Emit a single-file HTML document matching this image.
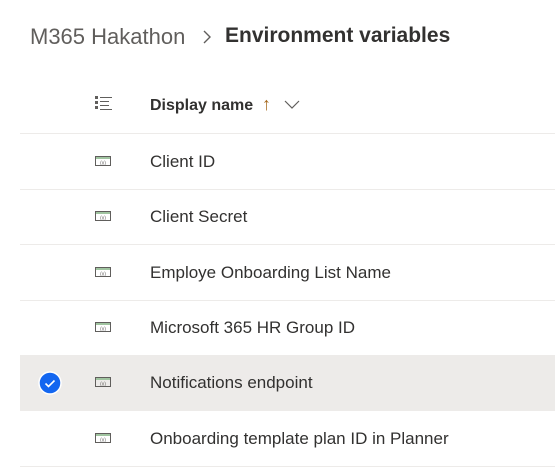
<!DOCTYPE html>
<html><head><style>
body{margin:0;width:555px;height:439px;overflow:hidden;background:#fff;font-family:"Liberation Sans",sans-serif;position:relative}
.a{position:absolute;white-space:nowrap}
.row{position:absolute;left:20px;width:535px;height:55px;border-bottom:1px solid #edebe9}
.row .t{position:absolute;left:130px;top:18px;font-size:17px;color:#323130}
.row svg{position:absolute;left:75px;top:22px}
</style></head><body>
<div class="a" style="left:30px;top:24px;font-size:22px;color:#605e5c">M365 Hakathon</div>
<svg class="a" style="left:201px;top:29px" width="12" height="16"><path d="M3 2l6 6-6 6" stroke="#605e5c" stroke-width="1.4" fill="none"/></svg>
<div class="a" style="left:225px;top:24px;font-size:21px;font-weight:bold;color:#323130">Environment variables</div>
<svg class="a" style="left:95px;top:96px" width="18" height="16"><g fill="#605e5c"><rect x="0" y="0" width="3" height="3"/><rect x="0" y="5" width="3" height="3"/><rect x="0" y="10" width="3" height="3"/><rect x="5" y="1" width="12" height="1"/><rect x="5" y="5" width="9" height="1"/><rect x="5" y="9" width="9" height="1"/><rect x="5" y="13" width="12" height="1"/></g></svg>
<div class="a" style="left:150px;top:97px;font-size:16px;font-weight:bold;color:#323130">Display name</div>
<div class="a" style="left:262px;top:94px;font-size:18px;color:#a66a1e">↑</div>
<svg class="a" style="left:284px;top:100px" width="16" height="10"><path d="M1 1l7 7 7-7" stroke="#605e5c" stroke-width="1.2" fill="none"/></svg>
<div class="a" style="left:20px;top:133px;width:535px;height:1px;background:#edebe9"></div>
<div class="row" style="top:134px"><svg width="16" height="10"><rect x=".5" y=".5" width="15" height="9" fill="none" stroke="#605e5c"/><rect x="1" y="1" width="14" height="2" fill="#a0c4a0"/><text x="8" y="8.5" font-size="5" text-anchor="middle" fill="#605e5c">(x)</text></svg><div class="t">Client ID</div></div>
<div class="row" style="top:189px"><svg width="16" height="10"><rect x=".5" y=".5" width="15" height="9" fill="none" stroke="#605e5c"/><rect x="1" y="1" width="14" height="2" fill="#a0c4a0"/><text x="8" y="8.5" font-size="5" text-anchor="middle" fill="#605e5c">(x)</text></svg><div class="t">Client Secret</div></div>
<div class="row" style="top:245px"><svg width="16" height="10"><rect x=".5" y=".5" width="15" height="9" fill="none" stroke="#605e5c"/><rect x="1" y="1" width="14" height="2" fill="#a0c4a0"/><text x="8" y="8.5" font-size="5" text-anchor="middle" fill="#605e5c">(x)</text></svg><div class="t">Employe Onboarding List Name</div></div>
<div class="row" style="top:300px"><svg width="16" height="10"><rect x=".5" y=".5" width="15" height="9" fill="none" stroke="#605e5c"/><rect x="1" y="1" width="14" height="2" fill="#a0c4a0"/><text x="8" y="8.5" font-size="5" text-anchor="middle" fill="#605e5c">(x)</text></svg><div class="t">Microsoft 365 HR Group ID</div></div>
<div class="row" style="top:355px;background:#edebe9"><svg width="16" height="10"><rect x=".5" y=".5" width="15" height="9" fill="none" stroke="#605e5c"/><rect x="1" y="1" width="14" height="2" fill="#a0c4a0"/><text x="8" y="8.5" font-size="5" text-anchor="middle" fill="#605e5c">(x)</text></svg><div class="t">Notifications endpoint</div>
<svg style="left:18px;top:16px" width="24" height="24"><circle cx="12" cy="12" r="11" fill="#1366f0" stroke="#fff" stroke-width="1.5"/><path d="M7.5 12.5l3 3 6-6" stroke="#fff" stroke-width="1.6" fill="none"/></svg></div>
<div class="row" style="top:411px"><svg width="16" height="10"><rect x=".5" y=".5" width="15" height="9" fill="none" stroke="#605e5c"/><rect x="1" y="1" width="14" height="2" fill="#a0c4a0"/><text x="8" y="8.5" font-size="5" text-anchor="middle" fill="#605e5c">(x)</text></svg><div class="t">Onboarding template plan ID in Planner</div></div>
</body></html>
